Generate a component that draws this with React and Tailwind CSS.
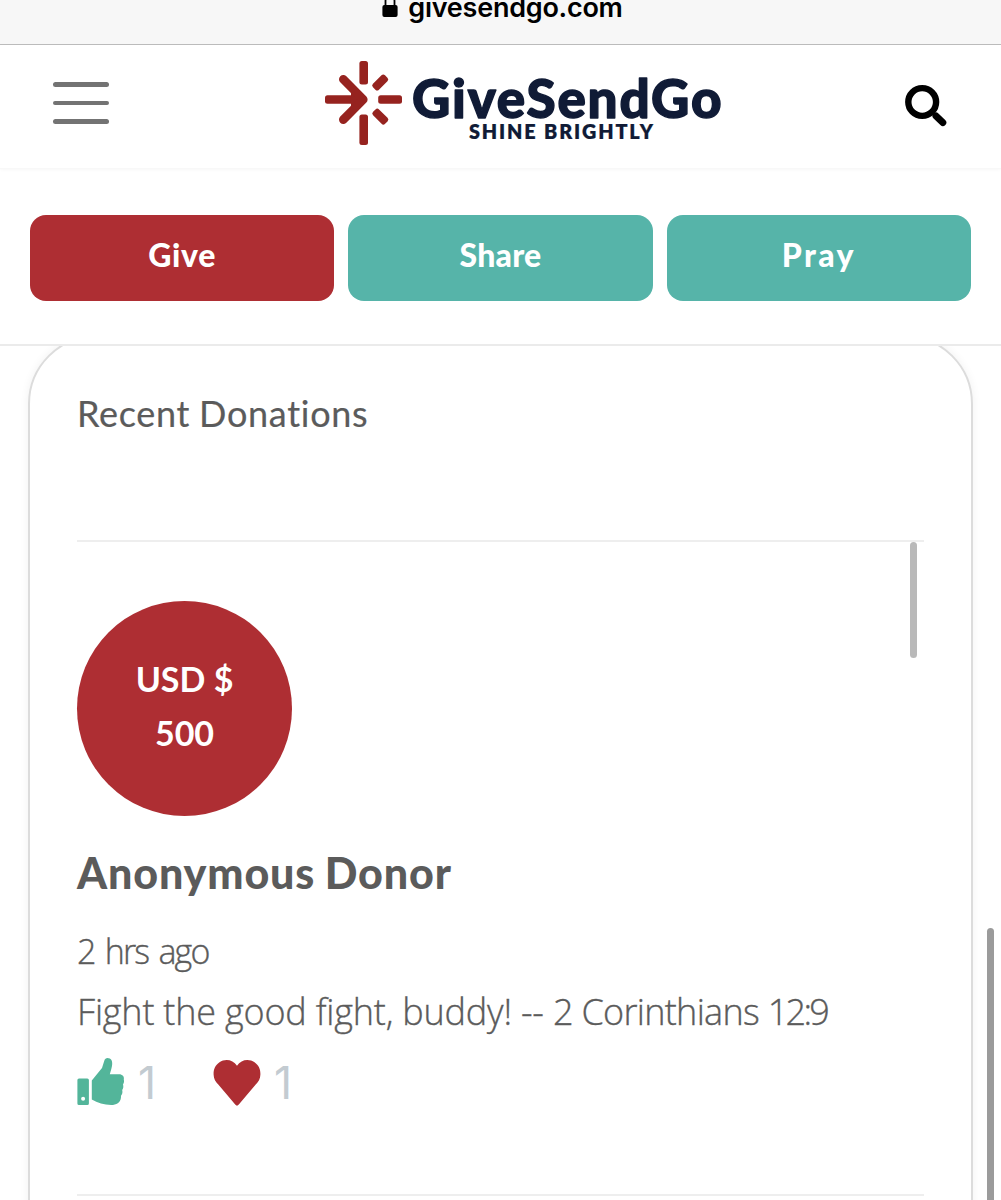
import React from 'react';

const ACTIONS = [
    { label: 'Give', className: 'bg-[#ae2e33] tracking-[0.7px]' },
    { label: 'Share', className: 'bg-[#56b4a9] tracking-[0.2px]' },
    { label: 'Pray', className: 'bg-[#56b4a9] tracking-[2.4px]' },
];

function LockIcon() {
    return (
        <svg width="16" height="24" viewBox="0 0 16 24" fill="none" className="shrink-0">
            <path d="M3.5 14V8a4.5 4.5 0 0 1 9 0v6" stroke="#000" strokeWidth="1.8" />
            <rect x="0.4" y="12" width="15.2" height="12" rx="2" fill="#000" />
        </svg>
    );
}

function Logo() {
    return (
        <svg width="400" height="88" viewBox="0 0 400 88">
            <g fill="#96231f">
                <rect x="34.4" y="2" width="8.6" height="23.5" rx="2.5" />
                <rect x="34.4" y="55.5" width="8.6" height="30.5" rx="2.5" />
                <rect x="0" y="36.2" width="36" height="8.6" rx="2.5" />
                <rect x="53.2" y="36.2" width="23.8" height="8.6" rx="2.5" />
                <rect x="-8.5" y="-4.2" width="17" height="8.4" rx="2.5" transform="translate(55.2 23.5) rotate(-45)" />
                <rect x="-8.5" y="-4.2" width="17" height="8.4" rx="2.5" transform="translate(55.3 57.6) rotate(45)" />
                <path d="M26 31L38 40.5L26 50Z" />
            </g>
            <path d="M18.3 20.3L38.3 40.5L18.3 60.6" stroke="#96231f" strokeWidth="8.6" strokeLinecap="round" strokeLinejoin="round" fill="none" />
            <g fill="#101b36" stroke="#101b36" fontFamily="Lato, sans-serif">
                <text x="87" y="58.5" fontSize="53" fontWeight="900" strokeWidth="1.4" strokeLinejoin="round" textLength="309.5" lengthAdjust="spacing">GiveSendGo</text>
                <text x="144" y="79.6" fontSize="19.8" fontWeight="800" strokeWidth="0.2" textLength="184" lengthAdjust="spacing">SHINE BRIGHTLY</text>
            </g>
        </svg>
    );
}

function SearchIcon() {
    return (
        <svg width="44" height="44" viewBox="0 0 44 44" fill="none" stroke="#000">
            <circle cx="18.2" cy="18" r="13.9" strokeWidth="6.4" />
            <path d="M32 32L38.8 38.5" strokeWidth="7" strokeLinecap="round" />
        </svg>
    );
}

function ThumbIcon() {
    return (
        <svg width="48" height="50" viewBox="0 0 48 50" fill="#53b59a">
            <path fillRule="evenodd" d="M2 21.5H10.3a1.6 1.6 0 0 1 1.6 1.6V46.4a1.6 1.6 0 0 1-1.6 1.6H2a1.6 1.6 0 0 1-1.6-1.6V23.1A1.6 1.6 0 0 1 2 21.5ZM6.1 39.8a2 2 0 1 0 0 4a2 2 0 1 0 0-4Z" />
            <path d="M14.8 23.5L25 11L27.3 3.8C28 .8 30.5 .3 32.8 1.5C36 3.3 35.5 8 34.3 12L32.8 17.2H42C45.5 17.2 47.5 19.5 46.8 22.5C47.3 24.5 47 26 46 27.5C46.7 29.5 46.3 31.5 45.2 33C45.8 35.5 45.3 37.2 44 38.8C44.3 44.5 41 47.5 36 47.9C28 48.3 21 46 14.8 42.5Z" />
        </svg>
    );
}

function HeartIcon() {
    return (
        <svg width="48" height="48" viewBox="0 0 48 48" fill="#ae2e33">
            <path d="M24 6.8C28 .4 36 -.4 41.5 3.2C46 6.2 47.5 10.5 47.4 15.5C47.3 20 45.5 22.8 42.5 25.8L25.8 45.5Q24 47.8 22.2 45.5L5.5 25.8C2.5 22.8 .7 20 .6 15.5C.5 10.5 2 6.2 6.5 3.2C12 -.4 20 .4 24 6.8Z" />
        </svg>
    );
}

export default function App() {
    return (
        <div className="relative flex h-[1200px] w-[1001px] flex-col overflow-hidden bg-white font-[Lato,sans-serif] text-[#5b5b5b]">
            {/* Browser address bar */}
            <div className="flex h-[45px] shrink-0 items-start justify-center border-b border-[#bcbcbc] bg-[#f7f7f7]">
                <div className="-mt-[7px] ml-[4px] flex items-start gap-[10px]">
                    <LockIcon />
                    <span className="font-[Inter,sans-serif] text-[27px] leading-[30px] font-semibold tracking-[-0.25px] text-black">givesendgo.com</span>
                </div>
            </div>

            {/* Site header */}
            <header className="flex h-[124px] shrink-0 items-start justify-between border-b border-[#f8f8f8] px-[53px] shadow-[0_1px_3px_rgba(0,0,0,0.03)]">
                <button className="mt-[37px] flex w-14 flex-col gap-[14px]" aria-label="Menu">
                    <span className="h-[4.6px] w-full rounded-full bg-[#737373]" />
                    <span className="h-[4.6px] w-full rounded-full bg-[#737373]" />
                    <span className="h-[4.6px] w-full rounded-full bg-[#737373]" />
                </button>
                <div className="mt-[14px] ml-[36px]">
                    <Logo />
                </div>
                <button className="mt-[39px]" aria-label="Search">
                    <SearchIcon />
                </button>
            </header>

            {/* Campaign actions */}
            <div className="grid h-[177px] shrink-0 grid-cols-3 items-start gap-[14px] border-b-2 border-[#ebebeb] px-[30px] pt-[46px]">
                {ACTIONS.map((a) => (
                    <button key={a.label} className={`h-[86px] rounded-2xl pb-[6px] text-[32px] font-black text-white ${a.className}`}>
                        {a.label}
                    </button>
                ))}
            </div>

            {/* Donations */}
            <main className="flex-1 overflow-hidden px-[28px]">
                <section className="-mt-[11px] h-[960px] rounded-[69px] border-2 border-[#dcdcdc] px-[47px] pt-[52px] shadow-[0_0_10px_rgba(0,0,0,0.06)]">
                    <h2 className="h-[151px] text-[36px] leading-[48px] tracking-[0.7px] [word-spacing:-1px] [-webkit-text-stroke:0.2px]">Recent Donations</h2>
                    <div className="relative h-[656px] border-y-2 border-[#eeeeee] pt-[59px]">
                        <div className="flex size-[215px] flex-col items-center justify-center rounded-full bg-[#ae2e33] pb-[5px] text-[34px] leading-[54px] font-bold text-white">
                            <span>USD $</span>
                            <span>500</span>
                        </div>
                        <h3 className="mt-[27px] text-[43px] leading-[60px] font-black tracking-[0.85px] [word-spacing:-1.5px]">Anonymous Donor</h3>
                        <p className="mt-[21px] font-['Open_Sans',sans-serif] text-[34px] leading-[54px] font-light tracking-[-1.8px] [word-spacing:3px] [-webkit-text-stroke:0.35px]">2 hrs ago</p>
                        <p className="mt-[6px] font-['Open_Sans',sans-serif] text-[36px] leading-[56px] font-light whitespace-nowrap [font-variant-ligatures:none] [-webkit-text-stroke:0.35px]">
                            <span className="tracking-[-0.2px]">Fight the good fight, buddy! -- </span>
                            <span className="tracking-[-0.7px]">2 Corinthians </span>
                            <span className="tracking-[-2.7px]">12:9</span>
                        </p>
                        <div className="mt-[17px] flex items-start font-[Inter,sans-serif] text-[44.5px] leading-[53px] font-normal text-[#c3cbd1]">
                            <ThumbIcon />
                            <span className="ml-[13px] w-[75px]">1</span>
                            <div className="pt-[2px]">
                                <HeartIcon />
                            </div>
                            <span className="ml-[13px]">1</span>
                        </div>
                        <div className="absolute top-0 right-[7px] h-[116px] w-[7px] rounded-full bg-[#b9b9b9]" />
                    </div>
                </section>
            </main>

            {/* Page scrollbar */}
            <div className="absolute top-[928px] right-[7px] h-[300px] w-[7px] rounded-full bg-[#9b9b9b]" />
        </div>
    );
}
